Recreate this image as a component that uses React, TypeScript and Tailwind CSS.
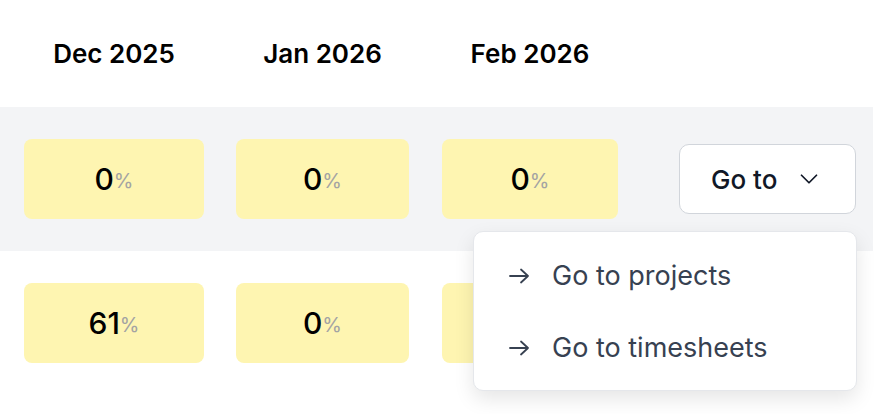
import { ChevronDown } from "lucide-react";

const months = [
  { label: "Dec 2025", w: "w-[180px]", ml: "ml-6" },
  { label: "Jan 2026", w: "w-[173px]", ml: "ml-8" },
  { label: "Feb 2026", w: "w-[176px]", ml: "ml-[33px]" },
];

const rows = [
  { values: ["0", "0", "0"], shaded: true },
  { values: ["61", "0", "0"], shaded: false },
];

function Pct({ value }: { value: string }) {
  return (
    <div className="h-20 rounded-lg bg-[#fef5b1] flex items-center justify-center">
      <span className="text-[30px] font-medium text-black leading-none">{value}</span>
      <span className="text-[20px] text-[#a3a3a3] leading-none mt-[4px]">%</span>
    </div>
  );
}

function Arrow() {
  return (
    <svg width="22" height="16" viewBox="0 0 22 16" fill="none" stroke="#374151" strokeWidth={1.8} strokeLinecap="round" strokeLinejoin="round">
      <path d="M2 8h18M13 1.5 20 8l-7 6.5" />
    </svg>
  );
}

export default function App() {
  return (
    <div className="w-[888px] h-[414px] bg-white overflow-hidden font-['Inter',sans-serif]">
      <div className="w-[873px]">
        {/* header */}
        <div className="h-[107px] flex items-center">
          {months.map(m => (
            <div key={m.label} className={`${m.w} ${m.ml} text-center text-[26px] font-semibold text-black`}>
              {m.label}
            </div>
          ))}
        </div>

        {rows.map((row, ri) => (
          <div key={ri} className={`h-[144px] flex items-center ${row.shaded ? "bg-[#f3f4f6]" : "bg-white"}`}>
            {row.values.map((v, i) => (
              <div key={i} className={`${months[i].w} ${months[i].ml}`}>
                <Pct value={v} />
              </div>
            ))}
            {ri === 0 && (
              <div className="relative ml-[61px]">
                <button className="w-[177px] h-[70px] rounded-[10px] border border-[#d1d5db] bg-white flex items-center pl-[31px] gap-[17px] text-[26px] font-medium text-[#111827]">
                  Go to
                  <ChevronDown size={30} strokeWidth={1.4} className="text-[#111827]" />
                </button>
                <div className="absolute top-[87px] left-[-206px] w-[384px] h-[160px] rounded-[10px] border border-[#e5e7eb] bg-white shadow-[0_8px_20px_rgba(0,0,0,0.1)] py-2 z-10">
                  {["Go to projects", "Go to timesheets"].map(t => (
                    <div key={t} className="h-[72px] flex items-center pl-[34px] gap-[22px] text-[27px] text-[#374151]">
                      <Arrow />
                      {t}
                    </div>
                  ))}
                </div>
              </div>
            )}
          </div>
        ))}
      </div>
    </div>
  );
}
